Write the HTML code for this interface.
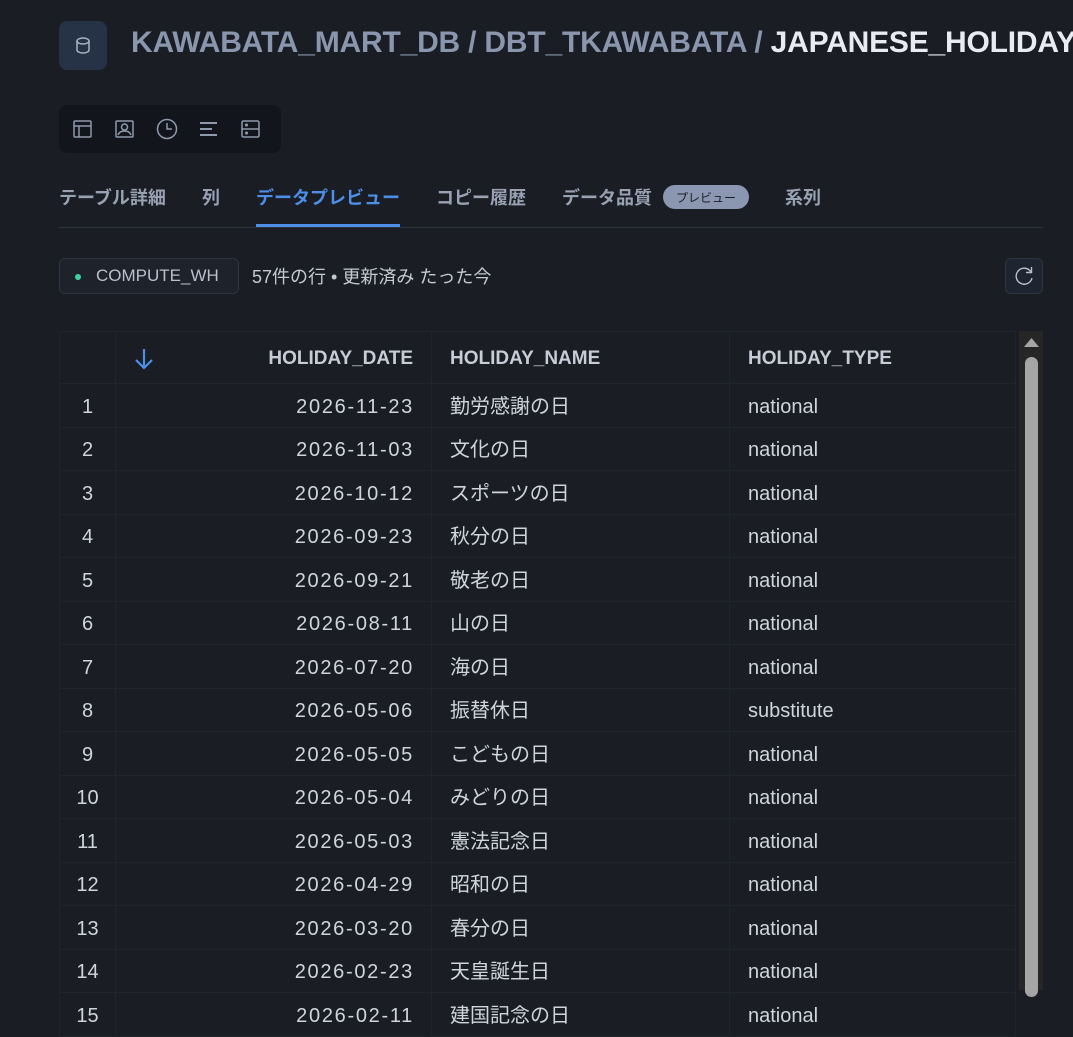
<!DOCTYPE html>
<html><head><meta charset="utf-8"><style>
*{box-sizing:border-box;margin:0;padding:0}
html,body{height:990px}
body{width:1073px;overflow:hidden;background:#1a1d24;font-family:"Liberation Sans","Noto Sans CJK JP",sans-serif;color:#c9ced8;position:relative}
.abs{position:absolute}
.dbicon{left:59px;top:21px;width:48px;height:49px;border-radius:8px;background:#263246}
.title{left:131px;top:26px;font-size:30px;font-weight:bold;color:#8a96ad;white-space:nowrap;letter-spacing:-0.2px}
.title b{color:#e8ebf0}
.tb{left:59px;top:105px;width:222px;height:48px;border-radius:8px;background:#12161c}
.tabs{top:185px;left:59px;font-size:18px;line-height:26px;font-weight:bold;color:#98a2b3;white-space:nowrap}
.line{left:59px;top:227px;width:984px;height:1px;background:#2c323d}
.ul{left:256px;top:224px;width:144px;height:3px;background:#4c8fe8}
.badge{left:663px;top:185px;width:86px;height:24px;border-radius:12px;background:#8b97b0;color:#1b1e25;font-size:12px;text-align:center;line-height:26px}
.wh{left:59px;top:258px;width:180px;height:36px;border:1px solid #2d3442;border-radius:6px;background:#1d222b;font-size:17px;color:#b9c0cc;line-height:34px;padding-left:36px}
.wh:before{content:"";position:absolute;left:15px;top:15px;width:6px;height:6px;border-radius:50%;background:#3fd3a0}
.ref{left:1005px;top:258px;width:38px;height:36px;border:1px solid #2d3442;border-radius:6px;background:#1f2530}
table{position:absolute;left:59px;top:331px;border-collapse:collapse;font-size:20px;color:#d0d4dc;table-layout:fixed}
td{border:1px solid #20242b;height:43.5px;padding:3px 18px 0;white-space:nowrap;line-height:22px;vertical-align:middle}
th{height:52px;border:1px solid #20242b;font-size:19px;line-height:22px;color:#c7ccd6;text-align:left;padding:2px 18px 0}
.n{width:56px;text-align:center;padding-left:0;padding-right:0}
.d{width:316px;text-align:right}
td.d{letter-spacing:1.7px;padding-right:17px}
.m{width:298px}
.t{width:286px}
.sb{left:1019px;top:331px;width:24px;height:659px;background:#262626}
.th{left:1025px;top:357px;width:13px;height:640px;border-radius:7px;background:#a5a5a5}
</style></head><body>
<div class="abs dbicon"><svg width="48" height="49" viewBox="0 0 48 49"><g fill="none" stroke="#a9b3c4" stroke-width="1.5"><ellipse cx="24" cy="20" rx="6" ry="3"/><path d="M18 20v9c0 1.7 2.7 3 6 3s6-1.3 6-3v-9"/></g></svg></div>
<div class="abs title">KAWABATA_MART_DB / DBT_TKAWABATA / <b>JAPANESE_HOLIDAYS</b></div>
<div class="abs tb"><svg width="222" height="48" viewBox="0 0 222 48" fill="none" stroke="#8e99ad" stroke-width="1.5">
<rect x="15" y="16" width="17" height="16" rx="1"/><path d="M15 21h17M20 21v11"/>
<rect x="57" y="16" width="17" height="16" rx="1"/><circle cx="65.5" cy="22" r="3"/><path d="M59 30c1-3 4-4 6.5-4s5.5 1 6.5 4"/>
<circle cx="108" cy="24" r="9.5"/><path d="M108 18v6h5"/>
<path d="M141 18h17M141 24h12M141 30h17" stroke-width="2"/>
<rect x="183" y="16" width="17" height="16" rx="1.5"/><path d="M183 24h17"/><circle cx="187.5" cy="20" r=".8" fill="#8e99ad"/><circle cx="187.5" cy="28" r=".8" fill="#8e99ad"/>
</svg></div>
<div class="abs tabs"><span style="position:absolute;left:0">テーブル詳細</span><span style="position:absolute;left:143px">列</span><span style="position:absolute;left:197px;color:#4c8fe8">データプレビュー</span><span style="position:absolute;left:377px">コピー履歴</span><span style="position:absolute;left:503px">データ品質</span><span style="position:absolute;left:726px">系列</span></div>
<div class="abs badge">プレビュー</div>
<div class="abs line"></div><div class="abs ul"></div>
<div class="abs wh">COMPUTE_WH</div>
<div class="abs" style="left:252px;top:264px;font-size:18px;line-height:26px;color:#c4c9d2">57件の行 • 更新済み たった今</div>
<div class="abs ref"><svg width="36" height="34" viewBox="0 0 36 34" fill="none" stroke="#b8c0cc" stroke-width="1.4"><path d="M25 13a8 8 0 1 0 1 6"/><path d="M25.5 8v5.5h-5.5"/></svg></div>
<table>
<tr><th class="n"></th><th class="d" style="text-align:right;position:relative"><svg style="position:absolute;left:16px;top:15px" width="24" height="24" viewBox="0 0 24 24" fill="none" stroke="#4c8fe8" stroke-width="2.2"><path d="M12 2v19M4 13l8 8 8-8"/></svg>HOLIDAY_DATE</th><th class="m">HOLIDAY_NAME</th><th class="t">HOLIDAY_TYPE</th></tr>
<tr><td class="n">1</td><td class="d">2026-11-23</td><td class="m">勤労感謝の日</td><td class="t">national</td></tr>
<tr><td class="n">2</td><td class="d">2026-11-03</td><td class="m">文化の日</td><td class="t">national</td></tr>
<tr><td class="n">3</td><td class="d">2026-10-12</td><td class="m">スポーツの日</td><td class="t">national</td></tr>
<tr><td class="n">4</td><td class="d">2026-09-23</td><td class="m">秋分の日</td><td class="t">national</td></tr>
<tr><td class="n">5</td><td class="d">2026-09-21</td><td class="m">敬老の日</td><td class="t">national</td></tr>
<tr><td class="n">6</td><td class="d">2026-08-11</td><td class="m">山の日</td><td class="t">national</td></tr>
<tr><td class="n">7</td><td class="d">2026-07-20</td><td class="m">海の日</td><td class="t">national</td></tr>
<tr><td class="n">8</td><td class="d">2026-05-06</td><td class="m">振替休日</td><td class="t">substitute</td></tr>
<tr><td class="n">9</td><td class="d">2026-05-05</td><td class="m">こどもの日</td><td class="t">national</td></tr>
<tr><td class="n">10</td><td class="d">2026-05-04</td><td class="m">みどりの日</td><td class="t">national</td></tr>
<tr><td class="n">11</td><td class="d">2026-05-03</td><td class="m">憲法記念日</td><td class="t">national</td></tr>
<tr><td class="n">12</td><td class="d">2026-04-29</td><td class="m">昭和の日</td><td class="t">national</td></tr>
<tr><td class="n">13</td><td class="d">2026-03-20</td><td class="m">春分の日</td><td class="t">national</td></tr>
<tr><td class="n">14</td><td class="d">2026-02-23</td><td class="m">天皇誕生日</td><td class="t">national</td></tr>
<tr><td class="n">15</td><td class="d">2026-02-11</td><td class="m">建国記念の日</td><td class="t">national</td></tr>
</table>
<div class="abs sb"></div>
<svg class="abs" style="left:1024px;top:336px" width="15" height="12"><path d="M0 11L7.5 2 15 11z" fill="#a5a5a5"/></svg>
<div class="abs th"></div>
</body></html>
